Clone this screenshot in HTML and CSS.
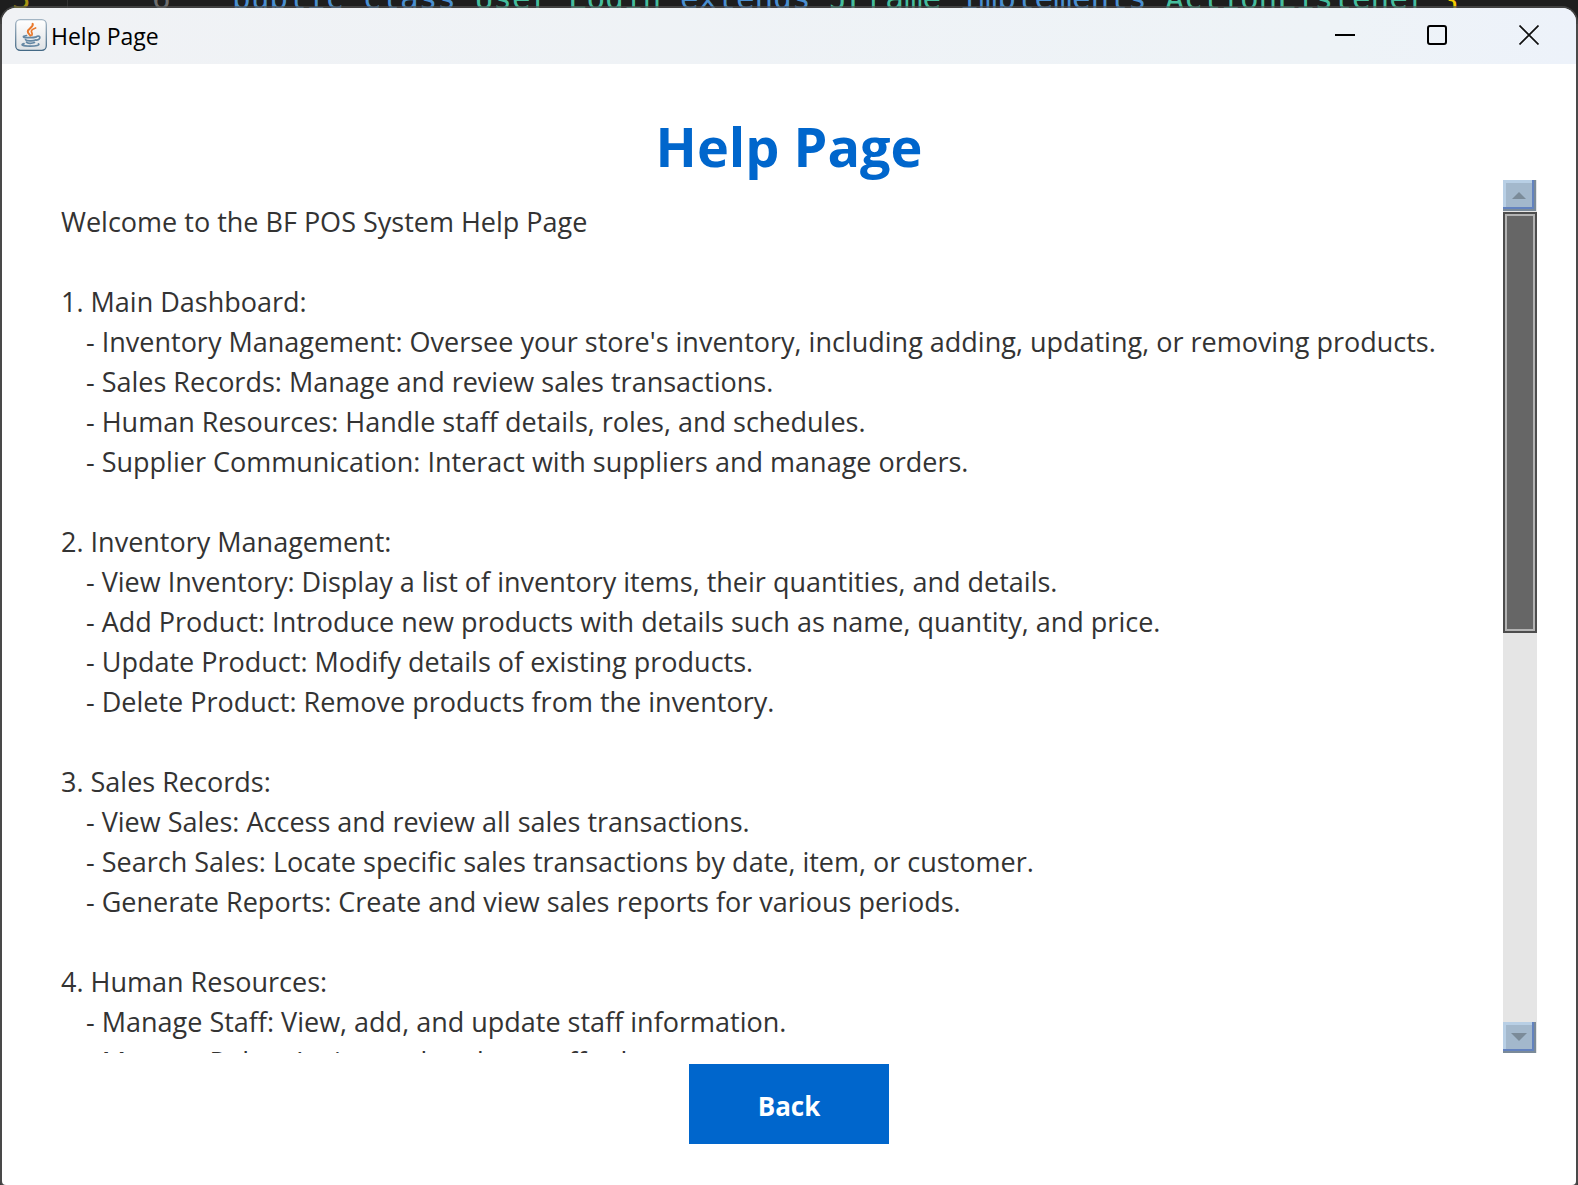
FILE: index.html
```
<!DOCTYPE html>
<html lang="en">
<head>
<meta charset="utf-8">
<meta name="viewport" content="width=device-width, initial-scale=1">
<title>Help Page</title>
<link rel="stylesheet" href="styles.css">
</head>
<body>
<div class="editor" aria-hidden="true"><span class="bracket">3</span><span class="line-no">6</span><code class="code"><span class="kw">public class</span> <span class="type">User_Login</span> <span class="kw">extends</span> <span class="type">JFrame</span> <span class="kw">implements</span> <span class="type">ActionListener</span> <span class="brace">{</span></code></div>
<div class="window">
  <header class="titlebar">
    <svg class="app-icon" viewBox="0 0 32 32" aria-hidden="true">
      <defs><linearGradient id="tile" x1="0" y1="0" x2="0" y2="1"><stop offset="0" stop-color="#fff"/><stop offset="1" stop-color="#dfe2e5"/></linearGradient>
      <linearGradient id="edge" x1="0" y1="0" x2="0" y2="1"><stop offset="0" stop-color="#a3b5c4"/><stop offset="1" stop-color="#446985"/></linearGradient></defs>
      <rect x=".7" y=".7" width="30.6" height="30.6" rx="4.5" fill="url(#tile)" stroke="url(#edge)" stroke-width="1.3"/>
      <g fill="none" stroke="#e9782b" stroke-linecap="round">
        <path d="M17.6 4.8c1.6 3.4-5 4.700-4.800 7.900.1 1.700 1.900 2.600 2.500 4" stroke-width="2"/>
        <path d="M20.600 9c-2.800 1-4.400 2.100-4.200 3.600.2 1.300 1.500 1.800.4 3.700" stroke-width="1.700"/>
      </g>
      <g fill="none" stroke="#6487a3" stroke-linecap="round" stroke-width="1.700">
        <path d="M11.500 16.500c-5 1-4 2.300 3.500 2.200 3 0 5-.3 6.500-.8"/>
        <path d="M22 17.200c3.700-1 4 2.900-.5 4"/>
        <path d="M10.500 20.500c.5 1.700 8 1.700 10 .5M11.500 23.300c1 1.400 5.800 1.300 8 .3"/>
        <path d="M9 24.600c-4 1.200-1.500 2.500 6 2.500 6.500 0 10-.9 8.500-2.200"/>
      </g>
    </svg>
    <span class="caption">Help Page</span>
    <div class="controls">
      <button class="control" type="button" aria-label="Minimize"><svg viewBox="0 0 20 20"><path d="M0 10h20" stroke="#000" stroke-width="2"/></svg></button>
      <button class="control" type="button" aria-label="Maximize"><svg viewBox="0 0 20 20"><rect x="1" y="1" width="18" height="18" rx="2" fill="none" stroke="#000" stroke-width="2"/></svg></button>
      <button class="control" type="button" aria-label="Close"><svg viewBox="0 0 20 20"><path d="M.5.5l19 19M19.500.5l-19 19" stroke="#111" stroke-width="1.700"/></svg></button>
    </div>
  </header>
  <main class="page">
    <h1 class="title">Help Page</h1>
    <div class="viewer">
      <article class="help">
        <p class="intro">Welcome to the BF POS System Help Page</p>
        <section class="topic">
          <h2 class="topic-name">1. Main Dashboard:</h2>
          <ul class="items">
            <li>- Inventory Management: Oversee your store's inventory, including adding, updating, or removing products.</li>
            <li>- Sales Records: Manage and review sales transactions.</li>
            <li>- Human Resources: Handle staff details, roles, and schedules.</li>
            <li>- Supplier Communication: Interact with suppliers and manage orders.</li>
          </ul>
        </section>
        <section class="topic">
          <h2 class="topic-name">2. Inventory Management:</h2>
          <ul class="items">
            <li>- View Inventory: Display a list of inventory items, their quantities, and details.</li>
            <li>- Add Product: Introduce new products with details such as name, quantity, and price.</li>
            <li>- Update Product: Modify details of existing products.</li>
            <li>- Delete Product: Remove products from the inventory.</li>
          </ul>
        </section>
        <section class="topic">
          <h2 class="topic-name">3. Sales Records:</h2>
          <ul class="items">
            <li>- View Sales: Access and review all sales transactions.</li>
            <li>- Search Sales: Locate specific sales transactions by date, item, or customer.</li>
            <li>- Generate Reports: Create and view sales reports for various periods.</li>
          </ul>
        </section>
        <section class="topic">
          <h2 class="topic-name">4. Human Resources:</h2>
          <ul class="items">
            <li>- Manage Staff: View, add, and update staff information.</li>
            <li>- Manage Roles: Assign and update staff roles.</li>
          </ul>
        </section>
      </article>
      <div class="scrollbar">
        <button class="arrow" type="button" aria-label="Scroll up"><svg viewBox="0 0 16 8"><path d="M1 8L8 1l7 7z" fill="#7b8b99"/></svg></button>
        <div class="track"><div class="thumb"></div></div>
        <button class="arrow" type="button" aria-label="Scroll down"><svg viewBox="0 0 16 8"><path d="M0 0h16L8 8z" fill="#7b8b99"/></svg></button>
      </div>
    </div>
    <button class="back" type="button">Back</button>
  </main>
</div>
</body>
</html>
```
FILE: styles.css
```
* { box-sizing: border-box; }

body {
  margin: 0;
  height: 100vh;
  min-height: 600px;
  padding: 8px 2px 0;
  display: flex;
  flex-direction: column;
  overflow: hidden;
  position: relative;
  background: #3a3a3a;
  font-family: "Open Sans", "Noto Sans", sans-serif;
}

/* editor line that shows above the window */
.editor {
  position: absolute;
  top: 0;
  left: 0;
  right: 0;
  height: 24px;
  padding-bottom: 10px;
  display: flex;
  align-items: flex-end;
  overflow: hidden;
  background: #1e1e1e;
  font-family: "DejaVu Sans Mono", monospace;
  font-size: 31px;
  line-height: 32px;
  white-space: pre;
}
.bracket { width: 68px; padding-left: 12px; color: #a89412; border-right: 1px solid #333; }
.line-no { width: 164px; padding-left: 84px; color: #6e6e6e; }
.code { font: inherit; }
.kw { color: #4a8fd0; }
.type { color: #45bd9d; }
.brace { color: #f5cc00; }

.window {
  flex: 1;
  min-height: 0;
  position: relative;
  display: flex;
  flex-direction: column;
  background: #fff;
  border-radius: 14px 14px 4px 4px;
  box-shadow: 0 0 0 2px rgba(80, 80, 80, .7);
  overflow: hidden;
}

.titlebar {
  flex: none;
  height: 56px;
  display: flex;
  align-items: center;
  padding: 0 1px 0 13px;
  background: linear-gradient(90deg, #f0f2f5, #eef3f7 85%, #edf2fa);
}
.app-icon { width: 32px; height: 32px; margin: 0 4px 2px 0; }
.caption { font-size: 23px; line-height: 32px; color: #000; }
.controls { margin-left: auto; display: flex; height: 100%; }
.control {
  width: 92px;
  padding: 0 0 2px;
  border: 0;
  background: none;
  display: flex;
  align-items: center;
  justify-content: center;
}
.control svg { width: 20px; height: 20px; }

.page {
  flex: 1;
  min-height: 0;
  display: flex;
  flex-direction: column;
  align-items: center;
  padding: 48px 39px 41px;
}
.title {
  margin: 0;
  font-size: 54px;
  line-height: 68px;
  font-weight: 700;
  color: #0066cc;
}

.viewer {
  flex: 1;
  min-height: 0;
  align-self: stretch;
  display: flex;
  overflow: hidden;
}
.help {
  flex: 1;
  min-width: 0;
  padding: 22px 20px 0;
  overflow: hidden;
  font-size: 27px;
  line-height: 40px;
  color: #333;
}
.intro { margin: 0; }
.topic { margin-top: 40px; }
.topic-name { margin: 0; font: inherit; }
.items { margin: 0; padding: 0 0 0 25px; list-style: none; }

.scrollbar {
  width: 34px;
  display: flex;
  flex-direction: column;
  background: #e5e5e5;
}
.arrow {
  flex: none;
  width: 33px;
  height: 31px;
  padding: 0;
  border: solid #7a8a99;
  border-width: 0 2px 2px 0;
  background: #a3b8cc;
  box-shadow: inset -2px -2px 0 #6382bf, inset 3px 3px 0 #b8cfe5;
  display: flex;
  align-items: center;
  justify-content: center;
}
.arrow svg { width: 16px; height: 8px; }
.track { flex: 1; padding-top: 1px; }
.thumb {
  height: 52%;
  background: #666;
  border: 2px solid #4d4d4d;
  box-shadow: inset 0 0 0 2px #b3b3b3;
}

.back {
  flex: none;
  width: 200px;
  height: 80px;
  margin-top: 11px;
  padding: 4px 0 0;
  border: 0;
  background: #0066cc;
  color: #fff;
  font: 700 26px/36px "Open Sans", "Noto Sans", sans-serif;
}
```
